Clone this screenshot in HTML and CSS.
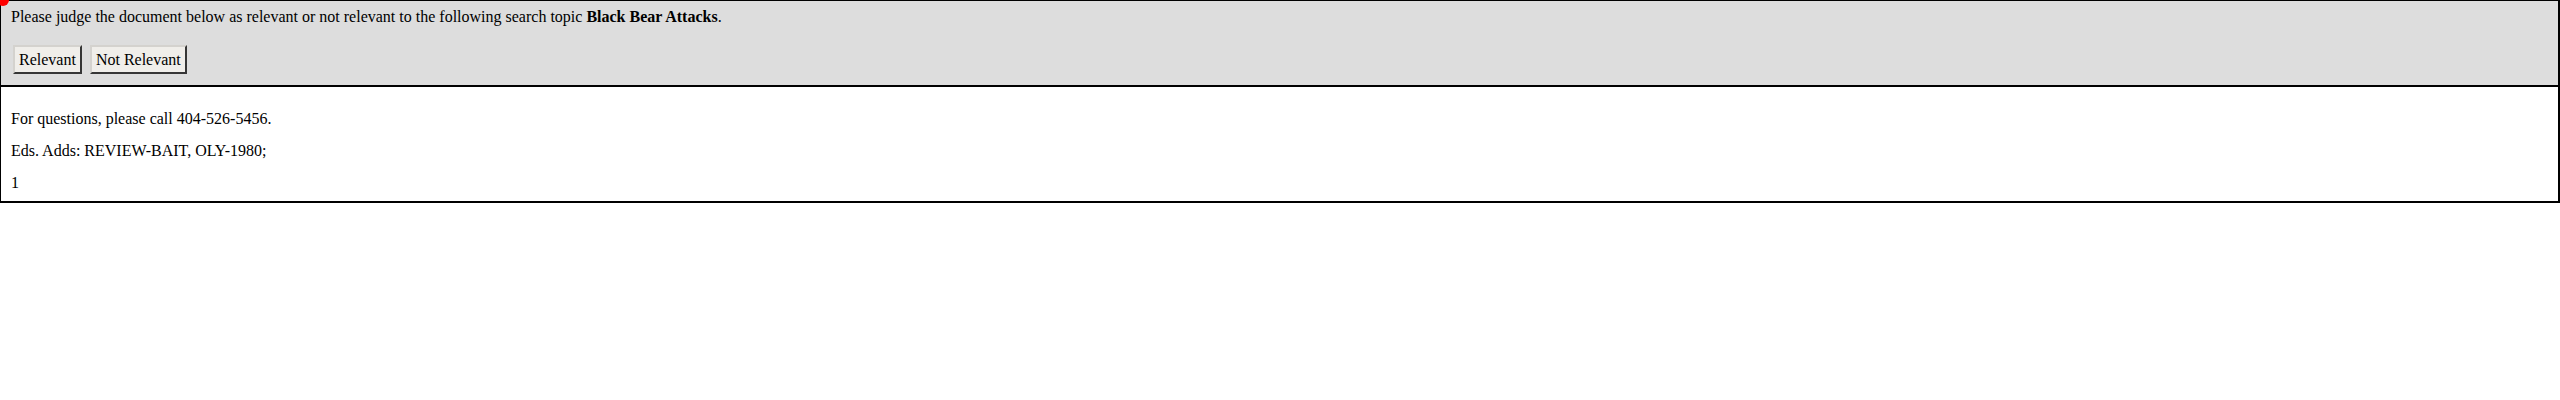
FILE: index.html
```html
<!DOCTYPE html>
<html>
<head>
<meta charset="utf-8">
<title>Relevance judgment</title>
<link rel="stylesheet" href="styles.css">
</head>
<body>
<div class="judge">
  <span class="dot"></span>
  <div class="header">
    <div class="prompt">Please judge the document below as relevant or not relevant to the following search topic <b>Black Bear Attacks</b>.</div>
    <div class="actions">
      <button class="btn" type="button">Relevant</button>
      <button class="btn" type="button">Not Relevant</button>
    </div>
  </div>
  <div class="doc">
    <div class="line">For questions, please call 404-526-5456.</div>
    <div class="line">Eds. Adds: REVIEW-BAIT, OLY-1980;</div>
    <div class="line">1</div>
  </div>
</div>
</body>
</html>
```

FILE: styles.css
```css
html, body {
  margin: 0;
  padding: 0;
  background: #fff;
}
body {
  font-family: "Liberation Serif", "Times New Roman", serif;
  font-size: 16px;
  color: #000;
}
.judge {
  position: relative;
  border: 1px solid #000;
  border-right-width: 2px;
  border-bottom-width: 2px;
}
.dot {
  position: absolute;
  left: -4px;
  top: -7px;
  width: 12px;
  height: 12px;
  border-radius: 50%;
  background: #f00;
}
.header {
  background: #dddddd;
  border-bottom: 2px solid #000;
  padding: 8px 10px 11px;
}
.prompt {
  line-height: 16px;
}
.actions {
  display: flex;
  gap: 8px;
  margin-top: 20px;
  padding-left: 2px;
}
.btn {
  font-family: "Liberation Serif", "Times New Roman", serif;
  font-size: 16px;
  color: #000;
  background: #f0eeea;
  border: 2px outset #d4d2ce;
  border-right-color: #8a8a8a;
  border-bottom-color: #8a8a8a;
  border-radius: 0;
  height: 29px;
  padding: 0 4px;
  margin: 0;
}
.doc {
  padding: 24px 10px 10px;
  display: flex;
  flex-direction: column;
  gap: 16px;
}
.line {
  line-height: 16px;
}
```
